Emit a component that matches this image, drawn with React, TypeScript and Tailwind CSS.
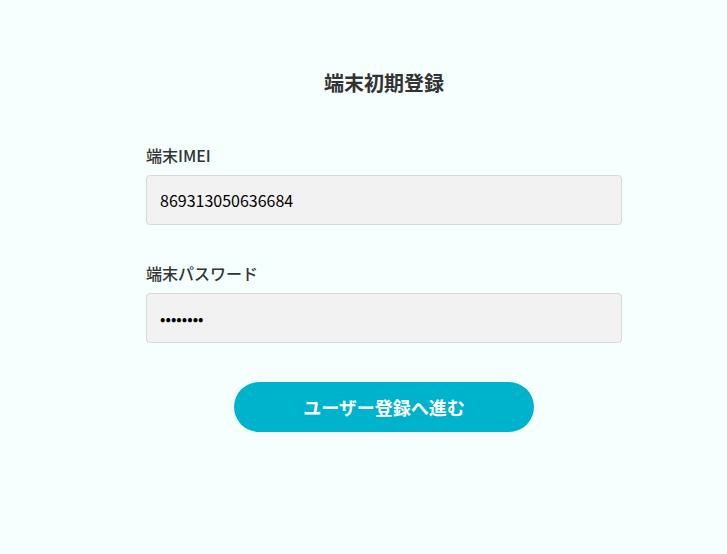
import React from "react";

const font = { fontFamily: '"Noto Sans CJK JP", "Noto Sans", sans-serif' };

const App = () => {
  return (
    <div
      className="min-h-[554px] w-full bg-[#f4fffe] text-[#333333]"
      style={font}
    >
      <div className="ml-[146px] w-[476px] pt-[68px]">
        <h1 className="text-center text-[20px] font-bold leading-[30px]">
          端末初期登録
        </h1>

        <div className="mt-[45px]">
          <label className="block text-[16px] font-medium leading-[24px]">端末IMEI</label>
          <input
            type="text"
            defaultValue="869313050636684"
            className="mt-[8px] block h-[50px] w-full rounded-[4px] border border-[#d9d9d9] bg-[#f2f2f2] px-[13px] text-[16px] text-black outline-none"
            style={font}
          />
        </div>

        <div className="mt-[36px]">
          <label className="block text-[16px] font-medium leading-[24px]">端末パスワード</label>
          <input
            type="password"
            defaultValue="12345678"
            className="mt-[8px] block h-[50px] w-full rounded-[4px] border border-[#d9d9d9] bg-[#f2f2f2] px-[13px] text-[16px] text-black outline-none"
            style={font}
          />
        </div>

        <div className="mt-[39px] flex justify-center">
          <button className="h-[50px] w-[300px] rounded-full bg-[#00b3cc] text-[18px] font-bold text-white">
            ユーザー登録へ進む
          </button>
        </div>
      </div>
    </div>
  );
};

export default App;
